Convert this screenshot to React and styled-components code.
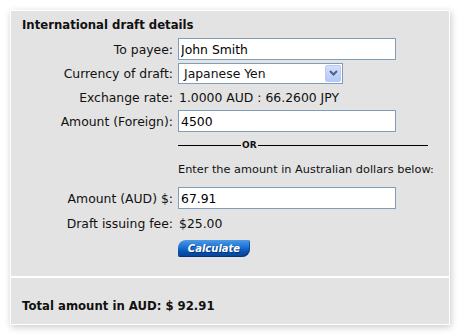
import React from "react";
import styled, { createGlobalStyle } from "styled-components";

const GlobalStyle = createGlobalStyle`
  body {
    margin: 0;
    background: #ffffff;
    font-family: "DejaVu Sans", Verdana, sans-serif;
    color: #111;
  }
`;

const Page = styled.div`
  padding: 10px;
`;

const Panel = styled.div`
  width: 440px;
  box-sizing: border-box;
  background: #e3e3e3;
  border: 1px solid #ffffff;
  box-shadow: 1px 2px 7px rgba(0, 0, 0, 0.22);
`;

const Upper = styled.div`
  padding: 6px 11px 19px 11px;
`;

const Lower = styled.div`
  border-top: 2px solid #ffffff;
  padding: 20px 11px 10px 11px;
`;

const Heading = styled.div`
  font-weight: bold;
  font-size: 11.7px;
  line-height: 16px;
  margin-bottom: ${(p) => p.$mb || 0}px;
  white-space: nowrap;
`;

const Row = styled.div`
  display: grid;
  grid-template-columns: 151px 1fr;
  column-gap: 5px;
  align-items: center;
  height: ${(p) => p.$h || 22}px;
  margin-bottom: ${(p) => (p.$mb === undefined ? 2 : p.$mb)}px;
  font-size: 12.4px;
`;

const Label = styled.label`
  text-align: right;
  white-space: nowrap;
`;

const Value = styled.span`
  padding-left: 1px;
  white-space: nowrap;
`;

const TextInput = styled.input`
  box-sizing: border-box;
  width: 218px;
  height: 22px;
  border: 1px solid #7f9db9;
  background: #fff;
  padding: 0 2px;
  margin: 0;
  font-family: "DejaVu Sans", Verdana, sans-serif;
  font-size: 12.4px;
  color: #000;
  outline: none;
`;

const SelectBox = styled.div`
  box-sizing: border-box;
  width: 165px;
  height: 21px;
  border: 1px solid #7f9db9;
  background: #fff;
  display: flex;
  align-items: center;
  justify-content: space-between;
  padding: 1px 1px 1px 5px;
`;

const SelectText = styled.span`
  white-space: nowrap;
`;

const ArrowButton = styled.span`
  box-sizing: border-box;
  width: 16px;
  height: 17px;
  border: 1px solid #b6c9f5;
  border-radius: 2px;
  background: linear-gradient(#d3e0fd, #b5c9f7);
  display: flex;
  align-items: center;
  justify-content: center;
`;

const OrLine = styled.div`
  display: flex;
  align-items: center;
  width: 250px;
`;

const Rule = styled.span`
  height: 1px;
  background: #000;
  flex: ${(p) => (p.$w ? `0 0 ${p.$w}px` : "1")};
`;

const OrText = styled.span`
  font-size: 9px;
  font-weight: bold;
  padding: 0 1px;
  line-height: 10px;
`;

const Note = styled.span`
  font-size: 11.3px;
  white-space: nowrap;
`;

const ButtonRow = styled.div`
  display: flex;
  padding-left: 156px;
  margin-top: 6px;
`;

const CalcButton = styled.button`
  box-sizing: border-box;
  width: 72px;
  height: 17px;
  padding: 0;
  border: none;
  border-radius: 8px 2px 8px 2px;
  background: linear-gradient(#4b9ae6 0%, #1a6fd0 45%, #0552b3 70%, #0b3f8e 100%);
  box-shadow: inset -1px -1px 0 rgba(0, 30, 90, 0.45);
  color: #fff;
  font-family: "DejaVu Sans", Verdana, sans-serif;
  font-size: 10px;
  font-weight: bold;
  font-style: italic;
  text-shadow: 1px 1px 0 rgba(0, 30, 90, 0.6);
  cursor: pointer;
`;

function ChevronDown() {
  return (
    <svg width="9" height="6" viewBox="0 0 9 6">
      <path d="M1 1 L4.5 4.5 L8 1" fill="none" stroke="#4d6185" strokeWidth="2" />
    </svg>
  );
}

export default function App() {
  return (
    <Page>
      <GlobalStyle />
      <Panel>
        <Upper>
          <Heading $mb={5}>International draft details</Heading>
          <Row>
            <Label>To payee:</Label>
            <TextInput defaultValue="John Smith" />
          </Row>
          <Row>
            <Label>Currency of draft:</Label>
            <SelectBox>
              <SelectText>Japanese Yen</SelectText>
              <ArrowButton>
                <ChevronDown />
              </ArrowButton>
            </SelectBox>
          </Row>
          <Row>
            <Label>Exchange rate:</Label>
            <Value>1.0000 AUD : 66.2600 JPY</Value>
          </Row>
          <Row>
            <Label>Amount (Foreign):</Label>
            <TextInput defaultValue="4500" />
          </Row>
          <Row>
            <span />
            <OrLine>
              <Rule $w={63} />
              <OrText>OR</OrText>
              <Rule />
            </OrLine>
          </Row>
          <Row $mb={7}>
            <span />
            <Note>Enter the amount in Australian dollars below:</Note>
          </Row>
          <Row $mb={3}>
            <Label>Amount (AUD) $:</Label>
            <TextInput defaultValue="67.91" />
          </Row>
          <Row $mb={0}>
            <Label>Draft issuing fee:</Label>
            <Value>$25.00</Value>
          </Row>
          <ButtonRow>
            <CalcButton>Calculate</CalcButton>
          </ButtonRow>
        </Upper>
        <Lower>
          <Heading>Total amount in AUD: $ 92.91</Heading>
        </Lower>
      </Panel>
    </Page>
  );
}
